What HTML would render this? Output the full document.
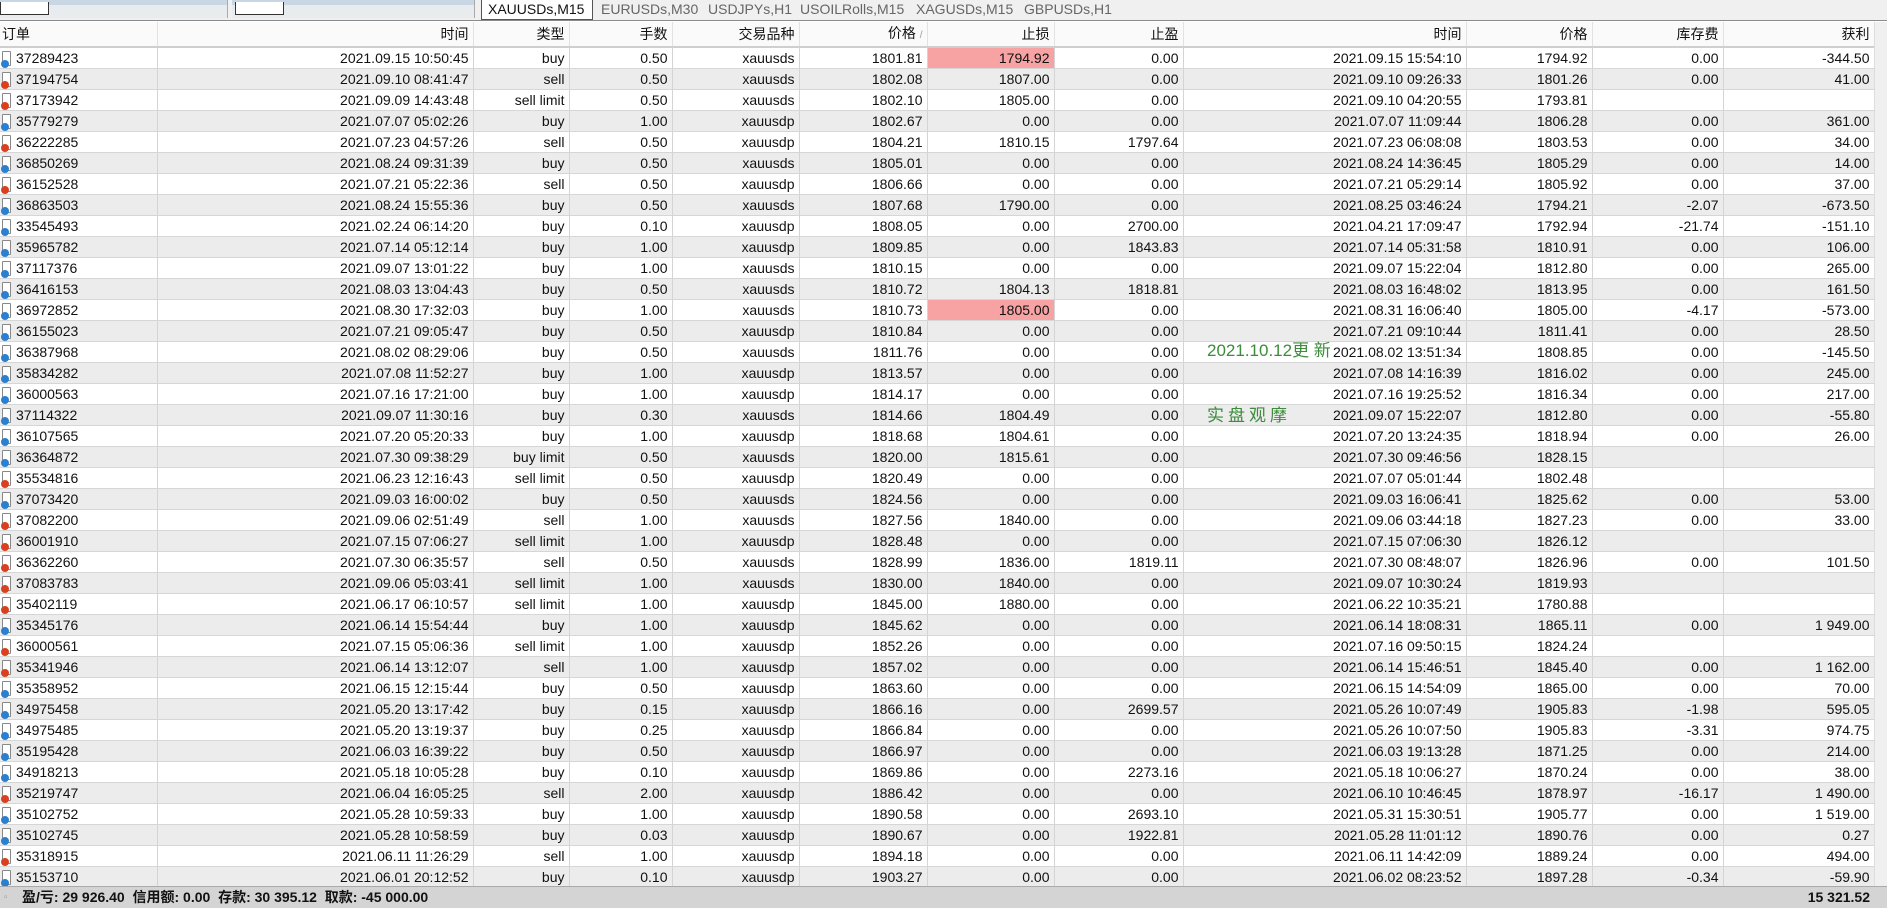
<!DOCTYPE html>
<html><head><meta charset="utf-8">
<style>
*{margin:0;padding:0;box-sizing:border-box}
body{width:1887px;height:908px;overflow:hidden;background:#fff;font-family:"Liberation Sans","Noto Sans CJK SC",sans-serif;font-size:14px;color:#111;position:relative}
#tabs{position:absolute;left:0;top:0;width:1887px;height:21px;background:#f0f0f0;border-bottom:1px solid #8a8a8a}
.pn{position:absolute;top:0;height:18px;background:#e9ecef;border-right:1px solid #aaa}
.pn .bl{position:absolute;left:0;top:0;right:0;height:5px;background:#c9d6e3}
.pn .wb{position:absolute;left:0;top:2px;width:49px;height:13px;background:#fff;border:1px solid #333;border-top:none}
.tab{position:absolute;top:0;height:20px;line-height:19px;font-size:14px;color:#666;padding:0 6px}
.tab.act{background:#fff;border:1px solid #555;border-top:none;color:#111}
table{position:absolute;left:0;top:22px;border-collapse:collapse;table-layout:fixed;width:1874px}
td,th{height:21px;border-right:1px solid #d4d4d4;border-bottom:1px solid #d6d6d6;text-align:right;padding:0 4px 0 0;white-space:nowrap;overflow:hidden;font-weight:normal;line-height:20px}
th{height:25px;background:#fafafa;border-bottom:2px solid #cfcfcf;border-right:1px solid #e2e2e2}
tr:nth-child(odd) td{background:#ececec}
td:first-child,th:first-child{text-align:left;padding-left:2px}
td.r{background:#f7a3a3!important}
.ic{display:inline-block;width:9px;height:15px;position:relative;vertical-align:-3px;margin-right:5px;border:1px solid #888;border-radius:1px;background:#fff}
.ic:after{content:"";position:absolute;left:-2px;bottom:-3px;width:8px;height:8px;border-radius:50%;background:#2a7fd0}
.s .ic:after{background:#d84020}
#sb{position:absolute;right:0;top:22px;width:13px;height:864px;background:#f0f0f0;border-left:1px solid #ddd}
#status{position:absolute;left:0;top:886px;width:1887px;height:22px;background:#d4d4d4;border-top:1px solid #aaa;font-weight:bold;font-size:14px;line-height:21px}
.g{position:absolute;color:#3c8c3c;font-size:17px;left:1207px}
</style></head><body>
<div id="tabs">
<div class="pn" style="left:0;width:228px"><div class="bl"></div><div class="wb"></div></div>
<div class="pn" style="left:232px;width:243px"><div class="bl"></div><div class="wb" style="left:3px"></div></div>
<div class="tab act" style="left:481px;width:112px">XAUUSDs,M15</div>
<div class="tab" style="left:595px">EURUSDs,M30</div>
<div class="tab" style="left:702px">USDJPYs,H1</div>
<div class="tab" style="left:794px">USOILRolls,M15</div>
<div class="tab" style="left:910px">XAGUSDs,M15</div>
<div class="tab" style="left:1018px">GBPUSDs,H1</div>
</div>
<table>
<colgroup><col style="width:157px"><col style="width:316px"><col style="width:96px"><col style="width:103px"><col style="width:127px"><col style="width:128px"><col style="width:127px"><col style="width:129px"><col style="width:283px"><col style="width:126px"><col style="width:131px"><col style="width:151px"></colgroup>
<tr><th>订单</th><th>时间</th><th>类型</th><th>手数</th><th>交易品种</th><th>价格 <span style="color:#999;font-size:10px">/</span></th><th>止损</th><th>止盈</th><th>时间</th><th>价格</th><th>库存费</th><th>获利</th></tr>
<tr><td><i class="ic"></i>37289423</td><td>2021.09.15 10:50:45</td><td>buy</td><td>0.50</td><td>xauusds</td><td>1801.81</td><td class="r">1794.92</td><td>0.00</td><td>2021.09.15 15:54:10</td><td>1794.92</td><td>0.00</td><td>-344.50</td></tr>
<tr class="s"><td><i class="ic"></i>37194754</td><td>2021.09.10 08:41:47</td><td>sell</td><td>0.50</td><td>xauusds</td><td>1802.08</td><td>1807.00</td><td>0.00</td><td>2021.09.10 09:26:33</td><td>1801.26</td><td>0.00</td><td>41.00</td></tr>
<tr class="s"><td><i class="ic"></i>37173942</td><td>2021.09.09 14:43:48</td><td>sell limit</td><td>0.50</td><td>xauusds</td><td>1802.10</td><td>1805.00</td><td>0.00</td><td>2021.09.10 04:20:55</td><td>1793.81</td><td></td><td></td></tr>
<tr><td><i class="ic"></i>35779279</td><td>2021.07.07 05:02:26</td><td>buy</td><td>1.00</td><td>xauusdp</td><td>1802.67</td><td>0.00</td><td>0.00</td><td>2021.07.07 11:09:44</td><td>1806.28</td><td>0.00</td><td>361.00</td></tr>
<tr class="s"><td><i class="ic"></i>36222285</td><td>2021.07.23 04:57:26</td><td>sell</td><td>0.50</td><td>xauusdp</td><td>1804.21</td><td>1810.15</td><td>1797.64</td><td>2021.07.23 06:08:08</td><td>1803.53</td><td>0.00</td><td>34.00</td></tr>
<tr><td><i class="ic"></i>36850269</td><td>2021.08.24 09:31:39</td><td>buy</td><td>0.50</td><td>xauusds</td><td>1805.01</td><td>0.00</td><td>0.00</td><td>2021.08.24 14:36:45</td><td>1805.29</td><td>0.00</td><td>14.00</td></tr>
<tr class="s"><td><i class="ic"></i>36152528</td><td>2021.07.21 05:22:36</td><td>sell</td><td>0.50</td><td>xauusdp</td><td>1806.66</td><td>0.00</td><td>0.00</td><td>2021.07.21 05:29:14</td><td>1805.92</td><td>0.00</td><td>37.00</td></tr>
<tr><td><i class="ic"></i>36863503</td><td>2021.08.24 15:55:36</td><td>buy</td><td>0.50</td><td>xauusds</td><td>1807.68</td><td>1790.00</td><td>0.00</td><td>2021.08.25 03:46:24</td><td>1794.21</td><td>-2.07</td><td>-673.50</td></tr>
<tr><td><i class="ic"></i>33545493</td><td>2021.02.24 06:14:20</td><td>buy</td><td>0.10</td><td>xauusdp</td><td>1808.05</td><td>0.00</td><td>2700.00</td><td>2021.04.21 17:09:47</td><td>1792.94</td><td>-21.74</td><td>-151.10</td></tr>
<tr><td><i class="ic"></i>35965782</td><td>2021.07.14 05:12:14</td><td>buy</td><td>1.00</td><td>xauusdp</td><td>1809.85</td><td>0.00</td><td>1843.83</td><td>2021.07.14 05:31:58</td><td>1810.91</td><td>0.00</td><td>106.00</td></tr>
<tr><td><i class="ic"></i>37117376</td><td>2021.09.07 13:01:22</td><td>buy</td><td>1.00</td><td>xauusds</td><td>1810.15</td><td>0.00</td><td>0.00</td><td>2021.09.07 15:22:04</td><td>1812.80</td><td>0.00</td><td>265.00</td></tr>
<tr><td><i class="ic"></i>36416153</td><td>2021.08.03 13:04:43</td><td>buy</td><td>0.50</td><td>xauusds</td><td>1810.72</td><td>1804.13</td><td>1818.81</td><td>2021.08.03 16:48:02</td><td>1813.95</td><td>0.00</td><td>161.50</td></tr>
<tr><td><i class="ic"></i>36972852</td><td>2021.08.30 17:32:03</td><td>buy</td><td>1.00</td><td>xauusds</td><td>1810.73</td><td class="r">1805.00</td><td>0.00</td><td>2021.08.31 16:06:40</td><td>1805.00</td><td>-4.17</td><td>-573.00</td></tr>
<tr><td><i class="ic"></i>36155023</td><td>2021.07.21 09:05:47</td><td>buy</td><td>0.50</td><td>xauusdp</td><td>1810.84</td><td>0.00</td><td>0.00</td><td>2021.07.21 09:10:44</td><td>1811.41</td><td>0.00</td><td>28.50</td></tr>
<tr><td><i class="ic"></i>36387968</td><td>2021.08.02 08:29:06</td><td>buy</td><td>0.50</td><td>xauusds</td><td>1811.76</td><td>0.00</td><td>0.00</td><td>2021.08.02 13:51:34</td><td>1808.85</td><td>0.00</td><td>-145.50</td></tr>
<tr><td><i class="ic"></i>35834282</td><td>2021.07.08 11:52:27</td><td>buy</td><td>1.00</td><td>xauusdp</td><td>1813.57</td><td>0.00</td><td>0.00</td><td>2021.07.08 14:16:39</td><td>1816.02</td><td>0.00</td><td>245.00</td></tr>
<tr><td><i class="ic"></i>36000563</td><td>2021.07.16 17:21:00</td><td>buy</td><td>1.00</td><td>xauusdp</td><td>1814.17</td><td>0.00</td><td>0.00</td><td>2021.07.16 19:25:52</td><td>1816.34</td><td>0.00</td><td>217.00</td></tr>
<tr><td><i class="ic"></i>37114322</td><td>2021.09.07 11:30:16</td><td>buy</td><td>0.30</td><td>xauusds</td><td>1814.66</td><td>1804.49</td><td>0.00</td><td>2021.09.07 15:22:07</td><td>1812.80</td><td>0.00</td><td>-55.80</td></tr>
<tr><td><i class="ic"></i>36107565</td><td>2021.07.20 05:20:33</td><td>buy</td><td>1.00</td><td>xauusdp</td><td>1818.68</td><td>1804.61</td><td>0.00</td><td>2021.07.20 13:24:35</td><td>1818.94</td><td>0.00</td><td>26.00</td></tr>
<tr><td><i class="ic"></i>36364872</td><td>2021.07.30 09:38:29</td><td>buy limit</td><td>0.50</td><td>xauusds</td><td>1820.00</td><td>1815.61</td><td>0.00</td><td>2021.07.30 09:46:56</td><td>1828.15</td><td></td><td></td></tr>
<tr class="s"><td><i class="ic"></i>35534816</td><td>2021.06.23 12:16:43</td><td>sell limit</td><td>0.50</td><td>xauusdp</td><td>1820.49</td><td>0.00</td><td>0.00</td><td>2021.07.07 05:01:44</td><td>1802.48</td><td></td><td></td></tr>
<tr><td><i class="ic"></i>37073420</td><td>2021.09.03 16:00:02</td><td>buy</td><td>0.50</td><td>xauusds</td><td>1824.56</td><td>0.00</td><td>0.00</td><td>2021.09.03 16:06:41</td><td>1825.62</td><td>0.00</td><td>53.00</td></tr>
<tr class="s"><td><i class="ic"></i>37082200</td><td>2021.09.06 02:51:49</td><td>sell</td><td>1.00</td><td>xauusds</td><td>1827.56</td><td>1840.00</td><td>0.00</td><td>2021.09.06 03:44:18</td><td>1827.23</td><td>0.00</td><td>33.00</td></tr>
<tr class="s"><td><i class="ic"></i>36001910</td><td>2021.07.15 07:06:27</td><td>sell limit</td><td>1.00</td><td>xauusdp</td><td>1828.48</td><td>0.00</td><td>0.00</td><td>2021.07.15 07:06:30</td><td>1826.12</td><td></td><td></td></tr>
<tr class="s"><td><i class="ic"></i>36362260</td><td>2021.07.30 06:35:57</td><td>sell</td><td>0.50</td><td>xauusds</td><td>1828.99</td><td>1836.00</td><td>1819.11</td><td>2021.07.30 08:48:07</td><td>1826.96</td><td>0.00</td><td>101.50</td></tr>
<tr class="s"><td><i class="ic"></i>37083783</td><td>2021.09.06 05:03:41</td><td>sell limit</td><td>1.00</td><td>xauusds</td><td>1830.00</td><td>1840.00</td><td>0.00</td><td>2021.09.07 10:30:24</td><td>1819.93</td><td></td><td></td></tr>
<tr class="s"><td><i class="ic"></i>35402119</td><td>2021.06.17 06:10:57</td><td>sell limit</td><td>1.00</td><td>xauusdp</td><td>1845.00</td><td>1880.00</td><td>0.00</td><td>2021.06.22 10:35:21</td><td>1780.88</td><td></td><td></td></tr>
<tr><td><i class="ic"></i>35345176</td><td>2021.06.14 15:54:44</td><td>buy</td><td>1.00</td><td>xauusdp</td><td>1845.62</td><td>0.00</td><td>0.00</td><td>2021.06.14 18:08:31</td><td>1865.11</td><td>0.00</td><td>1 949.00</td></tr>
<tr class="s"><td><i class="ic"></i>36000561</td><td>2021.07.15 05:06:36</td><td>sell limit</td><td>1.00</td><td>xauusdp</td><td>1852.26</td><td>0.00</td><td>0.00</td><td>2021.07.16 09:50:15</td><td>1824.24</td><td></td><td></td></tr>
<tr class="s"><td><i class="ic"></i>35341946</td><td>2021.06.14 13:12:07</td><td>sell</td><td>1.00</td><td>xauusdp</td><td>1857.02</td><td>0.00</td><td>0.00</td><td>2021.06.14 15:46:51</td><td>1845.40</td><td>0.00</td><td>1 162.00</td></tr>
<tr><td><i class="ic"></i>35358952</td><td>2021.06.15 12:15:44</td><td>buy</td><td>0.50</td><td>xauusdp</td><td>1863.60</td><td>0.00</td><td>0.00</td><td>2021.06.15 14:54:09</td><td>1865.00</td><td>0.00</td><td>70.00</td></tr>
<tr><td><i class="ic"></i>34975458</td><td>2021.05.20 13:17:42</td><td>buy</td><td>0.15</td><td>xauusdp</td><td>1866.16</td><td>0.00</td><td>2699.57</td><td>2021.05.26 10:07:49</td><td>1905.83</td><td>-1.98</td><td>595.05</td></tr>
<tr><td><i class="ic"></i>34975485</td><td>2021.05.20 13:19:37</td><td>buy</td><td>0.25</td><td>xauusdp</td><td>1866.84</td><td>0.00</td><td>0.00</td><td>2021.05.26 10:07:50</td><td>1905.83</td><td>-3.31</td><td>974.75</td></tr>
<tr><td><i class="ic"></i>35195428</td><td>2021.06.03 16:39:22</td><td>buy</td><td>0.50</td><td>xauusdp</td><td>1866.97</td><td>0.00</td><td>0.00</td><td>2021.06.03 19:13:28</td><td>1871.25</td><td>0.00</td><td>214.00</td></tr>
<tr><td><i class="ic"></i>34918213</td><td>2021.05.18 10:05:28</td><td>buy</td><td>0.10</td><td>xauusdp</td><td>1869.86</td><td>0.00</td><td>2273.16</td><td>2021.05.18 10:06:27</td><td>1870.24</td><td>0.00</td><td>38.00</td></tr>
<tr class="s"><td><i class="ic"></i>35219747</td><td>2021.06.04 16:05:25</td><td>sell</td><td>2.00</td><td>xauusdp</td><td>1886.42</td><td>0.00</td><td>0.00</td><td>2021.06.10 10:46:45</td><td>1878.97</td><td>-16.17</td><td>1 490.00</td></tr>
<tr><td><i class="ic"></i>35102752</td><td>2021.05.28 10:59:33</td><td>buy</td><td>1.00</td><td>xauusdp</td><td>1890.58</td><td>0.00</td><td>2693.10</td><td>2021.05.31 15:30:51</td><td>1905.77</td><td>0.00</td><td>1 519.00</td></tr>
<tr><td><i class="ic"></i>35102745</td><td>2021.05.28 10:58:59</td><td>buy</td><td>0.03</td><td>xauusdp</td><td>1890.67</td><td>0.00</td><td>1922.81</td><td>2021.05.28 11:01:12</td><td>1890.76</td><td>0.00</td><td>0.27</td></tr>
<tr class="s"><td><i class="ic"></i>35318915</td><td>2021.06.11 11:26:29</td><td>sell</td><td>1.00</td><td>xauusdp</td><td>1894.18</td><td>0.00</td><td>0.00</td><td>2021.06.11 14:42:09</td><td>1889.24</td><td>0.00</td><td>494.00</td></tr>
<tr><td><i class="ic"></i>35153710</td><td>2021.06.01 20:12:52</td><td>buy</td><td>0.10</td><td>xauusdp</td><td>1903.27</td><td>0.00</td><td>0.00</td><td>2021.06.02 08:23:52</td><td>1897.28</td><td>-0.34</td><td>-59.90</td></tr>
</table>
<div id="sb"></div>
<div class="g" style="top:336px">2021.10.12更 新</div>
<div class="g" style="top:401px;letter-spacing:4px">实盘观摩</div>
<div id="status"><span style="position:absolute;left:4px;color:#999;font-weight:normal;font-size:10px">▫</span><span style="position:absolute;left:22px">盈/亏: 29 926.40&nbsp; 信用额: 0.00&nbsp; 存款: 30 395.12&nbsp; 取款: -45 000.00</span><span style="position:absolute;right:17px">15 321.52</span></div>
</body></html>
